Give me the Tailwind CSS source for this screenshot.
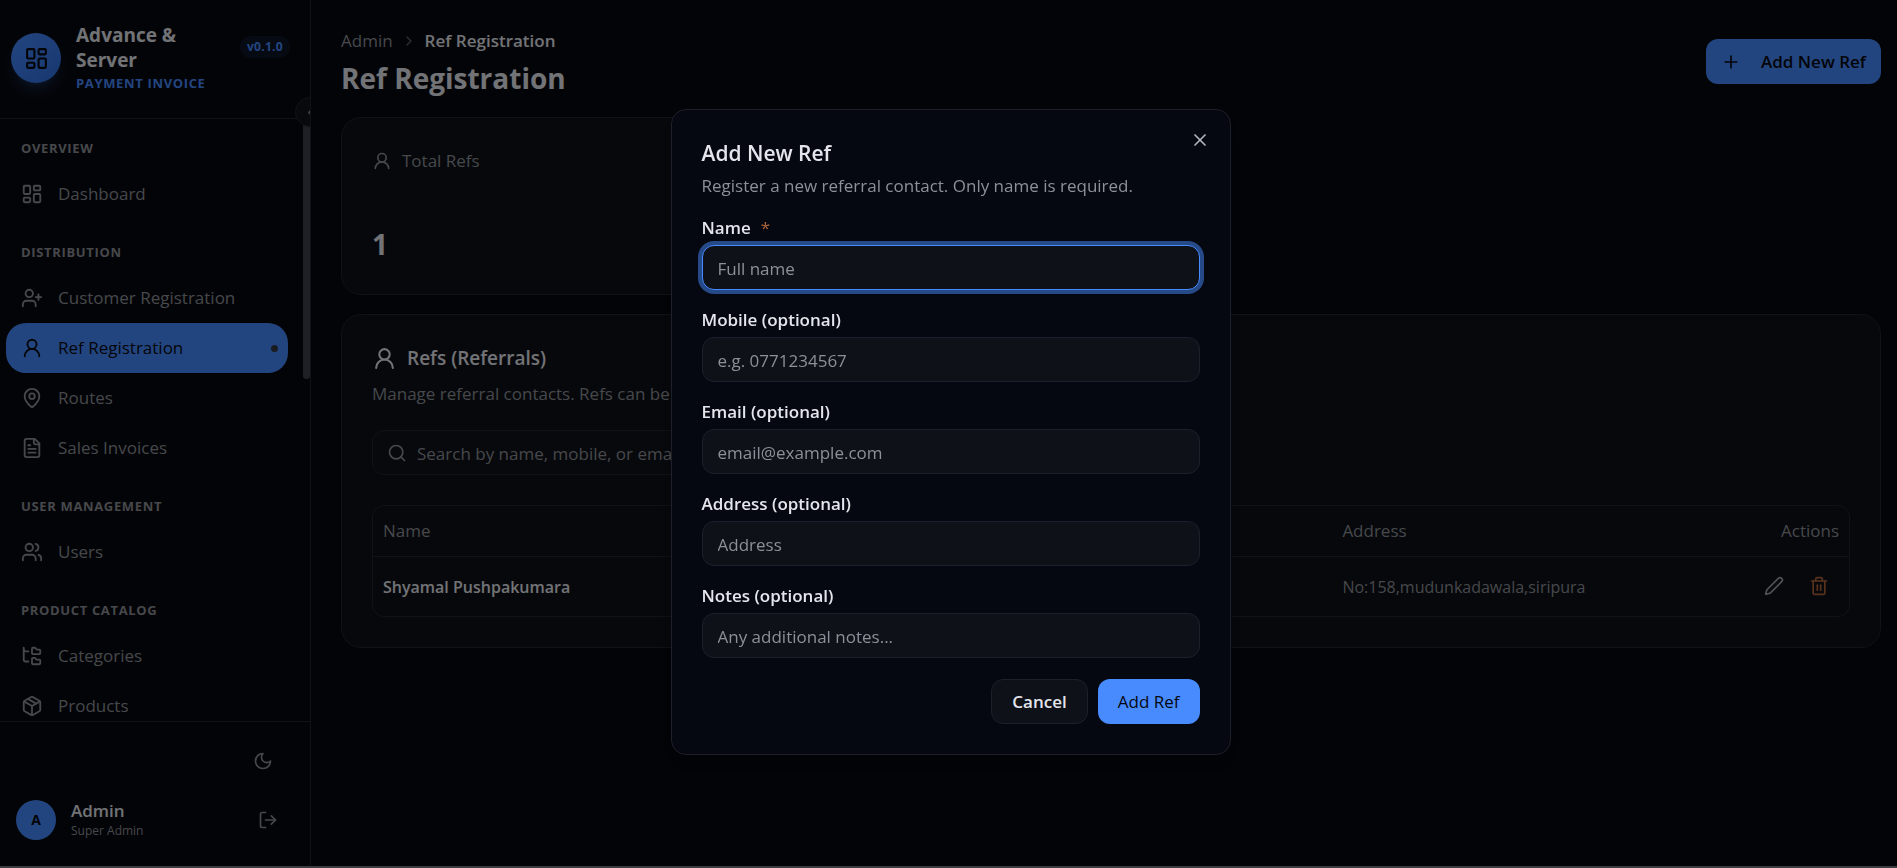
<!DOCTYPE html>
<html lang="en">
<head>
  <meta charset="UTF-8">
  <title>Ref Registration - Advance &amp; Server</title>
  <meta name="viewport" content="width=device-width, initial-scale=1.0">

  <!-- Tailwind CSS CDN -->
  <script src="https://cdn.jsdelivr.net/npm/@tailwindcss/browser@4"></script>
</head>
<body class="h-screen overflow-hidden bg-[#06080f] font-['Open_Sans','Noto_Sans',sans-serif] text-[17px] leading-[22px] text-[#e4e6ec]">

  <!-- Icons -->
  <svg class="hidden" xmlns="http://www.w3.org/2000/svg">
    <symbol id="i-dashboard" viewBox="0 0 24 24"><rect width="7" height="9" x="3" y="3" rx="1"/><rect width="7" height="5" x="14" y="3" rx="1"/><rect width="7" height="9" x="14" y="12" rx="1"/><rect width="7" height="5" x="3" y="16" rx="1"/></symbol>
    <symbol id="i-user-plus" viewBox="0 0 24 24"><path d="M16 21v-2a4 4 0 0 0-4-4H6a4 4 0 0 0-4 4v2"/><circle cx="9" cy="7" r="4"/><path d="M19 8v6"/><path d="M22 11h-6"/></symbol>
    <symbol id="i-user" viewBox="0 0 24 24"><circle cx="12" cy="8" r="5"/><path d="M20 21a8 8 0 0 0-16 0"/></symbol>
    <symbol id="i-pin" viewBox="0 0 24 24"><path d="M20 10c0 4.993-5.539 10.193-7.399 11.799a1 1 0 0 1-1.202 0C9.539 20.193 4 14.993 4 10a8 8 0 0 1 16 0"/><circle cx="12" cy="10" r="3"/></symbol>
    <symbol id="i-file" viewBox="0 0 24 24"><path d="M15 2H6a2 2 0 0 0-2 2v16a2 2 0 0 0 2 2h12a2 2 0 0 0 2-2V7Z"/><path d="M14 2v4a2 2 0 0 0 2 2h4"/><path d="M10 9H8"/><path d="M16 13H8"/><path d="M16 17H8"/></symbol>
    <symbol id="i-users" viewBox="0 0 24 24"><path d="M16 21v-2a4 4 0 0 0-4-4H6a4 4 0 0 0-4 4v2"/><path d="M16 3.128a4 4 0 0 1 0 7.744"/><path d="M22 21v-2a4 4 0 0 0-3-3.87"/><circle cx="9" cy="7" r="4"/></symbol>
    <symbol id="i-tree" viewBox="0 0 24 24"><path d="M20 10a1 1 0 0 0 1-1V6a1 1 0 0 0-1-1h-2.500a1 1 0 0 1-.8-.4l-.9-1.200A1 1 0 0 0 15 3h-2a1 1 0 0 0-1 1v5a1 1 0 0 0 1 1Z"/><path d="M20 21a1 1 0 0 0 1-1v-3a1 1 0 0 0-1-1h-2.900a1 1 0 0 1-.88-.55l-.42-.85a1 1 0 0 0-.92-.6H13a1 1 0 0 0-1 1v5a1 1 0 0 0 1 1Z"/><path d="M3 5a2 2 0 0 0 2 2h3"/><path d="M3 3v13a2 2 0 0 0 2 2h3"/></symbol>
    <symbol id="i-package" viewBox="0 0 24 24"><path d="M11 21.730a2 2 0 0 0 2 0l7-4A2 2 0 0 0 21 16V8a2 2 0 0 0-1-1.730l-7-4a2 2 0 0 0-2 0l-7 4A2 2 0 0 0 3 8v8a2 2 0 0 0 1 1.730z"/><path d="M12 22V12"/><path d="M3.290 7 12 12l8.710-5"/><path d="m7.500 4.270 9 5.150"/></symbol>
    <symbol id="i-moon" viewBox="0 0 24 24"><path d="M12 3a6 6 0 0 0 9 9 9 9 0 1 1-9-9Z"/></symbol>
    <symbol id="i-logout" viewBox="0 0 24 24"><path d="M9 21H5a2 2 0 0 1-2-2V5a2 2 0 0 1 2-2h4"/><path d="m16 17 5-5-5-5"/><path d="M21 12H9"/></symbol>
    <symbol id="i-left" viewBox="0 0 24 24"><path d="m15 18-6-6 6-6"/></symbol>
    <symbol id="i-right" viewBox="0 0 24 24"><path d="m9 18 6-6-6-6"/></symbol>
    <symbol id="i-plus" viewBox="0 0 24 24"><path d="M5 12h14"/><path d="M12 5v14"/></symbol>
    <symbol id="i-search" viewBox="0 0 24 24"><circle cx="11" cy="11" r="8"/><path d="m21 21-4.300-4.300"/></symbol>
    <symbol id="i-pencil" viewBox="0 0 24 24"><path d="M21.174 6.812a1 1 0 0 0-3.986-3.987L3.842 16.174a2 2 0 0 0-.5.830l-1.321 4.352a.5.5 0 0 0 .623.622l4.353-1.320a2 2 0 0 0 .830-.497z"/></symbol>
    <symbol id="i-trash" viewBox="0 0 24 24"><path d="M3 6h18"/><path d="M19 6v14a2 2 0 0 1-2 2H7a2 2 0 0 1-2-2V6"/><path d="M8 6V4a2 2 0 0 1 2-2h4a2 2 0 0 1 2 2v2"/><path d="M10 11v6"/><path d="M14 11v6"/></symbol>
    <symbol id="i-x" viewBox="0 0 24 24"><path d="M18 6 6 18"/><path d="m6 6 12 12"/></symbol>
  </svg>

  <div class="flex h-full">

    <!-- Sidebar -->
    <aside class="relative flex w-[311px] shrink-0 flex-col overflow-hidden border-r border-[#22242e] bg-[#07090f]">
      <header class="flex h-[119px] shrink-0 items-center border-b border-[#22242e] pr-5 pb-[2px] pl-[11px]">
        <div class="grid size-[50px] shrink-0 place-items-center rounded-full bg-linear-to-br from-[#478bff] to-[#2f6fe0] text-[#06080f] shadow-lg shadow-[#478bff]/20">
          <svg class="size-[25px] fill-none stroke-current stroke-2" stroke-linecap="round" stroke-linejoin="round"><use href="#i-dashboard"/></svg>
        </div>
        <div class="ml-[15px] min-w-0 flex-1">
          <p class="w-[120px] text-[19px] leading-[25px] font-bold">Advance &amp; Server</p>
          <p class="text-[13px] leading-5 font-bold tracking-wider whitespace-nowrap text-[#478bff]">PAYMENT INVOICE</p>
        </div>
        <span class="mb-[23px] rounded-full bg-[#478bff]/10 px-[7px] text-[12px] leading-[22px] font-bold tracking-wide text-[#478bff]">v0.1.0</span>
      </header>

      <div class="relative flex min-h-0 flex-1 overflow-hidden">
        <nav class="flex-1 space-y-[23px] pt-[19px] pr-[14px] pl-[6px] font-medium text-[#8d9097]">
          <section>
            <h2 class="mb-[11px] px-[15px] text-[13px] leading-5 font-bold tracking-wider">OVERVIEW</h2>
            <a href="#" class="flex h-[50px] items-center gap-[15px] px-[15px]"><svg class="size-[22px] fill-none stroke-current stroke-2" stroke-linecap="round" stroke-linejoin="round"><use href="#i-dashboard"/></svg>Dashboard</a>
          </section>
          <section>
            <h2 class="mb-[11px] px-[15px] text-[13px] leading-5 font-bold tracking-wider">DISTRIBUTION</h2>
            <a href="#" class="flex h-[50px] items-center gap-[15px] px-[15px]"><svg class="size-[22px] fill-none stroke-current stroke-2" stroke-linecap="round" stroke-linejoin="round"><use href="#i-user-plus"/></svg>Customer Registration</a>
            <a href="#" class="mr-px flex h-[50px] items-center gap-[15px] rounded-[20px] bg-[#478bff] pr-[10px] pl-[15px] text-[#06080f]"><svg class="size-[22px] fill-none stroke-current stroke-2" stroke-linecap="round" stroke-linejoin="round"><use href="#i-user"/></svg>Ref Registration<span class="ml-auto size-[7px] rounded-full bg-[#333743]"></span></a>
            <a href="#" class="flex h-[50px] items-center gap-[15px] px-[15px]"><svg class="size-[22px] fill-none stroke-current stroke-2" stroke-linecap="round" stroke-linejoin="round"><use href="#i-pin"/></svg>Routes</a>
            <a href="#" class="flex h-[50px] items-center gap-[15px] px-[15px]"><svg class="size-[22px] fill-none stroke-current stroke-2" stroke-linecap="round" stroke-linejoin="round"><use href="#i-file"/></svg>Sales Invoices</a>
          </section>
          <section>
            <h2 class="mb-[11px] px-[15px] text-[13px] leading-5 font-bold tracking-wider">USER MANAGEMENT</h2>
            <a href="#" class="flex h-[50px] items-center gap-[15px] px-[15px]"><svg class="size-[22px] fill-none stroke-current stroke-2" stroke-linecap="round" stroke-linejoin="round"><use href="#i-users"/></svg>Users</a>
          </section>
          <section>
            <h2 class="mb-[11px] px-[15px] text-[13px] leading-5 font-bold tracking-wider">PRODUCT CATALOG</h2>
            <a href="#" class="flex h-[50px] items-center gap-[15px] px-[15px]"><svg class="size-[22px] fill-none stroke-current stroke-2" stroke-linecap="round" stroke-linejoin="round"><use href="#i-tree"/></svg>Categories</a>
            <a href="#" class="flex h-[50px] items-center gap-[15px] px-[15px]"><svg class="size-[22px] fill-none stroke-current stroke-2" stroke-linecap="round" stroke-linejoin="round"><use href="#i-package"/></svg>Products</a>
          </section>
        </nav>
        <div class="h-[260px] w-[7px] rounded-b-full bg-[#3d414d]"></div>
      </div>

      <footer class="shrink-0 border-t border-[#22242e] px-4 pt-[19px] pb-[28px] text-[#8d9097]">
        <div class="flex h-10 items-center justify-end pr-[21px]">
          <button type="button" aria-label="Toggle theme"><svg class="size-5 fill-none stroke-current stroke-2" stroke-linecap="round" stroke-linejoin="round"><use href="#i-moon"/></svg></button>
        </div>
        <div class="mt-[19px] flex h-10 items-center pr-4">
          <span class="grid size-10 place-items-center rounded-full bg-[#478bff] text-[14px] font-bold text-[#06080f]">A</span>
          <div class="ml-[15px]">
            <p class="text-[17px] leading-[22px] font-semibold text-[#e4e6ec]">Admin</p>
            <p class="text-[12px] leading-[18px]">Super Admin</p>
          </div>
          <button type="button" aria-label="Log out" class="ml-auto"><svg class="size-5 fill-none stroke-current stroke-2" stroke-linecap="round" stroke-linejoin="round"><use href="#i-logout"/></svg></button>
        </div>
      </footer>

      <!-- Collapse handle on the sidebar edge -->
      <button type="button" aria-label="Collapse sidebar" class="absolute top-[97px] -right-[15px] grid size-[30px] place-items-center rounded-full border border-[#22242e] bg-[#10121a] text-[#8d9097]">
        <svg class="size-[15px] fill-none stroke-current stroke-2" stroke-linecap="round" stroke-linejoin="round"><use href="#i-left"/></svg>
      </button>
    </aside>

    <!-- Content -->
    <main class="min-w-0 flex-1 pt-[30px] pr-4 pl-[30px]">
      <div class="flex items-start justify-between">
        <div>
          <nav aria-label="Breadcrumb" class="flex items-center gap-2">
            <a href="#" class="text-[#8d9097]">Admin</a>
            <svg class="size-4 fill-none stroke-[#5c5f68] stroke-2" stroke-linecap="round" stroke-linejoin="round"><use href="#i-right"/></svg>
            <span class="font-semibold">Ref Registration</span>
          </nav>
          <h1 class="mt-[6px] text-[28px] leading-[40px] font-bold">Ref Registration</h1>
        </div>
        <button type="button" class="mt-[9px] flex h-[45px] items-center rounded-xl bg-[#478bff] px-[15px] font-semibold text-[#06080f]">
          <svg class="mr-5 size-5 fill-none stroke-current stroke-2" stroke-linecap="round" stroke-linejoin="round"><use href="#i-plus"/></svg>Add New Ref
        </button>
      </div>

      <div class="mt-[19px] grid grid-cols-3 gap-5">
        <section class="h-[178px] rounded-[20px] border border-[#22242e] bg-[#0e1018] px-[30px] pt-8">
          <h2 class="flex items-center gap-[10px] font-medium text-[#8d9097]"><svg class="size-5 fill-none stroke-current stroke-2" stroke-linecap="round" stroke-linejoin="round"><use href="#i-user"/></svg>Total Refs</h2>
          <p class="mt-[52px] text-[28px] leading-[40px] font-bold">1</p>
        </section>
      </div>

      <section class="mt-[19px] rounded-[20px] border border-[#22242e] bg-[#0e1018] p-[30px]">
        <h2 class="flex items-center gap-[10px] text-[19px] leading-[27px] font-semibold"><svg class="size-[25px] fill-none stroke-current stroke-2" stroke-linecap="round" stroke-linejoin="round"><use href="#i-user"/></svg>Refs (Referrals)</h2>
        <p class="mt-[11px] text-[#8d9097]">Manage referral contacts. Refs can be linked to customers.</p>
        <label class="mt-[25px] flex h-[45px] max-w-[480px] items-center gap-[10px] rounded-xl border border-[#22242e] bg-[#10121a] px-[14px] text-[#8d9097]">
          <svg class="size-5 shrink-0 fill-none stroke-current stroke-2" stroke-linecap="round" stroke-linejoin="round"><use href="#i-search"/></svg>
          <input type="text" aria-label="Search refs" placeholder="Search by name, mobile, or email..." class="w-full bg-transparent pt-[2px] placeholder:text-[#8d9097] focus:outline-none">
        </label>

        <div class="mt-[30px] overflow-hidden rounded-xl border border-[#22242e]">
          <table class="w-full text-left">
            <thead>
              <tr class="h-[50px] border-b border-[#22242e] text-[#8d9097]">
                <th class="w-[22%] px-[10px] font-medium">Name</th>
                <th class="w-[20%] px-[10px] font-medium">Mobile</th>
                <th class="w-[23%] px-[10px] font-medium">Email</th>
                <th class="px-[10px] font-medium">Address</th>
                <th class="px-[10px] text-right font-medium">Actions</th>
              </tr>
            </thead>
            <tbody class="text-[16px]">
              <tr class="h-[60px]">
                <td class="px-[10px] pt-[2px] font-semibold">Shyamal Pushpakumara</td>
                <td class="px-[10px] pt-[2px] text-[#8d9097]"></td>
                <td class="px-[10px] pt-[2px] text-[#8d9097]"></td>
                <td class="px-[10px] pt-[2px] text-[#8d9097]">No:158,mudunkadawala,siripura</td>
                <td class="px-5">
                  <div class="flex justify-end gap-[25px]">
                    <button type="button" aria-label="Edit"><svg class="size-5 fill-none stroke-[#a2a5ab] stroke-2" stroke-linecap="round" stroke-linejoin="round"><use href="#i-pencil"/></svg></button>
                    <button type="button" aria-label="Delete"><svg class="size-5 fill-none stroke-[#b0653a] stroke-2" stroke-linecap="round" stroke-linejoin="round"><use href="#i-trash"/></svg></button>
                  </div>
                </td>
              </tr>
            </tbody>
          </table>
        </div>
      </section>
    </main>
  </div>

  <!-- Add ref dialog -->
  <div class="fixed inset-0 flex items-center justify-center border-b-2 border-[#3c3d40] bg-black/50 pb-[2px] pl-1">
    <div role="dialog" aria-labelledby="dialog-title" class="relative w-full max-w-[560px] rounded-[15px] border border-[#1d202a] bg-[#050810] px-[30px] pt-[31px] pb-[30px] shadow-lg">
      <button type="button" aria-label="Close" class="absolute top-5 right-5 text-[#b4b7bf]"><svg class="size-5 fill-none stroke-current stroke-2" stroke-linecap="round" stroke-linejoin="round"><use href="#i-x"/></svg></button>
      <h2 id="dialog-title" class="text-[21px] leading-6 font-semibold">Add New Ref</h2>
      <p class="mt-[10px] text-[#8d9097]">Register a new referral contact. Only name is required.</p>

      <form class="mt-5 space-y-[19px]">
        <div>
          <label for="name" class="flex gap-[10px] font-semibold">Name <span class="font-normal text-[#b0653a]">*</span></label>
          <input id="name" type="text" placeholder="Full name" class="mt-[6px] h-[45px] w-full rounded-xl border border-[#478bff] bg-[#0e1118] px-[15px] pt-[2px] ring-4 ring-[#478bff]/50 outline-none placeholder:text-[#8d9097]">
        </div>
        <div>
          <label for="mobile" class="block font-semibold">Mobile (optional)</label>
          <input id="mobile" type="tel" placeholder="e.g. 0771234567" class="mt-[6px] h-[45px] w-full rounded-xl border border-[#1d202a] bg-[#0e1118] px-[15px] pt-[2px] placeholder:text-[#8d9097]">
        </div>
        <div>
          <label for="email" class="block font-semibold">Email (optional)</label>
          <input id="email" type="email" placeholder="email@example.com" class="mt-[6px] h-[45px] w-full rounded-xl border border-[#1d202a] bg-[#0e1118] px-[15px] pt-[2px] placeholder:text-[#8d9097]">
        </div>
        <div>
          <label for="address" class="block font-semibold">Address (optional)</label>
          <input id="address" type="text" placeholder="Address" class="mt-[6px] h-[45px] w-full rounded-xl border border-[#1d202a] bg-[#0e1118] px-[15px] pt-[2px] placeholder:text-[#8d9097]">
        </div>
        <div>
          <label for="notes" class="block font-semibold">Notes (optional)</label>
          <input id="notes" type="text" placeholder="Any additional notes..." class="mt-[6px] h-[45px] w-full rounded-xl border border-[#1d202a] bg-[#0e1118] px-[15px] pt-[2px] placeholder:text-[#8d9097]">
        </div>
        <div class="flex justify-end gap-[10px] pt-[2px]">
          <button type="button" class="h-[45px] rounded-xl border border-[#1d202a] bg-[#0e1118] px-5 font-semibold">Cancel</button>
          <button type="submit" class="h-[45px] rounded-xl bg-[#478bff] px-5 font-medium text-[#06080f]">Add Ref</button>
        </div>
      </form>
    </div>
  </div>

</body>
</html>
